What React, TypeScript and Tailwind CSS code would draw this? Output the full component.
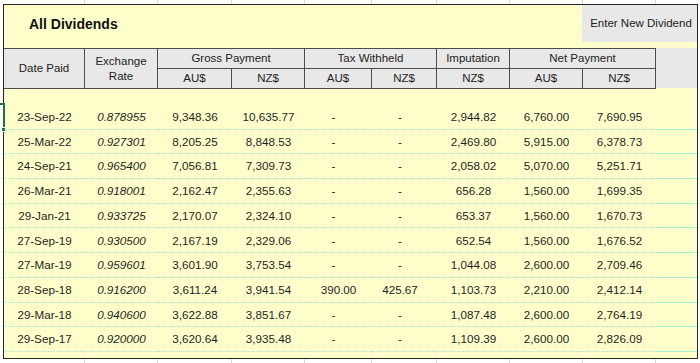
import React from "react";

const COLS = "grid grid-cols-[81px_73px_74px_73px_67px_65px_73px_73px_73px_41px]";

const rows: string[][] = [
  ["23-Sep-22", "0.878955", "9,348.36", "10,635.77", "-", "-", "2,944.82", "6,760.00", "7,690.95"],
  ["25-Mar-22", "0.927301", "8,205.25", "8,848.53", "-", "-", "2,469.80", "5,915.00", "6,378.73"],
  ["24-Sep-21", "0.965400", "7,056.81", "7,309.73", "-", "-", "2,058.02", "5,070.00", "5,251.71"],
  ["26-Mar-21", "0.918001", "2,162.47", "2,355.63", "-", "-", "656.28", "1,560.00", "1,699.35"],
  ["29-Jan-21", "0.933725", "2,170.07", "2,324.10", "-", "-", "653.37", "1,560.00", "1,670.73"],
  ["27-Sep-19", "0.930500", "2,167.19", "2,329.06", "-", "-", "652.54", "1,560.00", "1,676.52"],
  ["27-Mar-19", "0.959601", "3,601.90", "3,753.54", "-", "-", "1,044.08", "2,600.00", "2,709.46"],
  ["28-Sep-18", "0.916200", "3,611.24", "3,941.54", "390.00", "425.67", "1,103.73", "2,210.00", "2,412.14"],
  ["29-Mar-18", "0.940600", "3,622.88", "3,851.67", "-", "-", "1,087.48", "2,600.00", "2,764.19"],
  ["29-Sep-17", "0.920000", "3,620.64", "3,935.48", "-", "-", "1,109.39", "2,600.00", "2,826.09"],
];

function GridStrip() {
  return (
    <div className="flex h-[4px] bg-white">
      <div className="w-[4px]" />
      <div className={COLS}>
        {Array.from({ length: 9 }).map((_, i) => (
          <div key={i} className="border-r border-[#d9d9d9]" />
        ))}
        <div />
      </div>
    </div>
  );
}

export default function App() {
  const hb = "border-[#4d4d4d]";
  return (
    <div className="relative w-[700px] h-[363px] overflow-hidden bg-white font-['Liberation_Sans',Arial,sans-serif] text-[#1f1f1f]">
      <GridStrip />
      <div className="ml-[3px] w-[695px] border border-[#262626] bg-[#ffffcc]">
        {/* Title area */}
        <div className="flex h-[43px] justify-between">
          <div className="pl-[25px] pt-[11px] text-[14px] font-bold leading-[16px] text-[#111]">All Dividends</div>
          <div className="flex h-[37px] w-[115px] items-center justify-center bg-[#e8e8e8] pl-[3px] text-[11.5px] text-[#222]">
            Enter New Dividend
          </div>
        </div>
        {/* Header */}
        <div className={`${COLS} grid-rows-[21px_20px] text-[11.5px] leading-[15px] text-[#222]`}>
          <div className={`row-span-2 flex items-center justify-center border-t border-r border-b ${hb} bg-[#e8e8e8]`}>Date Paid</div>
          <div className={`row-span-2 flex flex-col items-center justify-center border-t border-r border-b ${hb} bg-[#e8e8e8]`}>
            <span>Exchange</span>
            <span>Rate</span>
          </div>
          <div className={`col-span-2 flex items-center justify-center border-t border-r border-b ${hb} bg-[#e8e8e8]`}>Gross Payment</div>
          <div className={`col-span-2 flex items-center justify-center border-t border-r border-b ${hb} bg-[#e8e8e8]`}>Tax Withheld</div>
          <div className={`flex items-center justify-center border-t border-r border-b ${hb} bg-[#e8e8e8]`}>Imputation</div>
          <div className={`col-span-2 flex items-center justify-center border-t border-r border-b ${hb} bg-[#e8e8e8]`}>Net Payment</div>
          <div className="row-span-2 h-[40px] bg-[#e8e8e8]" />
          <div className={`flex items-center justify-center border-r border-b ${hb} bg-[#e8e8e8]`}>AU$</div>
          <div className={`flex items-center justify-center border-r border-b ${hb} bg-[#e8e8e8]`}>NZ$</div>
          <div className={`flex items-center justify-center border-r border-b ${hb} bg-[#e8e8e8]`}>AU$</div>
          <div className={`flex items-center justify-center border-r border-b ${hb} bg-[#e8e8e8]`}>NZ$</div>
          <div className={`flex items-center justify-center border-r border-b ${hb} bg-[#e8e8e8]`}>NZ$</div>
          <div className={`flex items-center justify-center border-r border-b ${hb} bg-[#e8e8e8]`}>AU$</div>
          <div className={`flex items-center justify-center border-r border-b ${hb} bg-[#e8e8e8]`}>NZ$</div>
        </div>
        <div className="h-[16px]" />
        {/* Data rows */}
        <div className="text-[11.7px]">
          {rows.map((r, ri) => (
            <div key={ri} className={`${COLS} h-[24.7px]`}>
              {r.map((v, ci) => {
                let extra = "";
                if (ci === 1) extra = "italic";
                if (ci === 4 && v === "-") extra = "pr-[10px]";
                if (ci === 5) extra = "pr-[9px]";
                return (
                  <div
                    key={ci}
                    className={`flex items-center justify-center border-b border-dotted border-[#a9e6d2] ${extra}`}
                  >
                    {v}
                  </div>
                );
              })}
              <div className="border-b border-[#a6f0d0]" />
            </div>
          ))}
        </div>
        <div className="h-[6px]" />
      </div>
      <GridStrip />
      {/* Excel cell selection indicator */}
      <div className="absolute left-0 top-[103px] h-[2px] w-[4px] bg-[#217346]" />
      <div className="absolute left-[3px] top-[103px] h-[26px] w-[2px] bg-[#217346]" />
      <div className="absolute left-[1px] top-[127px] h-[5px] w-[5px] border border-white bg-[#217346]" />
    </div>
  );
}
